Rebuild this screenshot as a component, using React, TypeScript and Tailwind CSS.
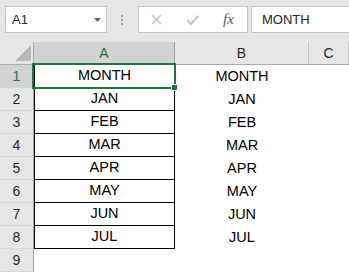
import React from 'react';

// ─── Data ─────────────────────────────────────────────────────────────────────

const months = ['MONTH', 'JAN', 'FEB', 'MAR', 'APR', 'MAY', 'JUN', 'JUL'];

// ─── Formula bar ──────────────────────────────────────────────────────────────

function FormulaBar() {
  return (
    <div className="flex h-[42px] items-start bg-[#e6e6e6] pl-[5px] pt-[6px]">
      {/* Name box */}
      <div className="flex h-[27px] w-[102px] items-center justify-between border border-[#c6c6c6] bg-white pl-[6px] pr-[5px]">
        <span className="text-[13px] text-[#262626]">A1</span>
        <svg width="7" height="4" viewBox="0 0 7 4">
          <path d="M0 0h7L3.5 4z" fill="#6b6b6b" />
        </svg>
      </div>

      {/* Grip dots */}
      <div className="ml-[14px] flex h-[27px] flex-col justify-center gap-[2px]">
        <span className="h-[2px] w-[2px] bg-[#a6a6a6]" />
        <span className="h-[2px] w-[2px] bg-[#a6a6a6]" />
        <span className="h-[2px] w-[2px] bg-[#a6a6a6]" />
      </div>

      {/* Cancel / enter / fx */}
      <div className="ml-[15px] flex h-[27px] w-[110px] items-center border border-[#c6c6c6] bg-white">
        <svg className="ml-[12px]" width="11" height="11" viewBox="0 0 11 11">
          <path d="M1 1l9 9M10 1l-9 9" stroke="#c4c4c4" strokeWidth="1.4" />
        </svg>
        <svg className="ml-[24px]" width="13" height="10" viewBox="0 0 13 10">
          <path d="M1 5l4 4 7-8" stroke="#c4c4c4" strokeWidth="2" fill="none" />
        </svg>
        <span className="ml-[24px] font-['Liberation_Serif',serif] text-[15px] italic leading-none text-[#595959]">
          fx
        </span>
      </div>

      {/* Formula input */}
      <div className="ml-[3px] flex h-[27px] flex-1 items-center border border-r-0 border-[#c6c6c6] bg-white pl-[10px]">
        <span className="text-[13px] text-[#262626]">MONTH</span>
      </div>
    </div>
  );
}

// ─── Grid ─────────────────────────────────────────────────────────────────────

function HeaderRow() {
  return (
    <div className="flex h-[23px] border-b border-[#ababab] bg-[#e6e6e6] text-[14px]">
      <div className="relative w-[34px] border-r border-[#ababab]">
        <svg className="absolute left-[15px] top-[3px]" width="16" height="16" viewBox="0 0 16 16">
          <path d="M16 0v16H0z" fill="#b9b9b9" />
        </svg>
      </div>
      <div className="flex w-[141px] items-center justify-center border-r border-[#9f9f9f] bg-[#d2d2d2] text-[#217346]">
        A
      </div>
      <div className="flex w-[134px] items-center justify-center border-r border-[#c6c6c6] text-[#262626]">
        B
      </div>
      <div className="flex w-[40px] items-center justify-center border-r border-[#c6c6c6] text-[#262626]">
        C
      </div>
    </div>
  );
}

function DataRow({ n, value }: { n: number; value?: string }) {
  const selected = n === 1;
  return (
    <div className="flex h-[23px]">
      <div
        className={`flex w-[34px] items-center justify-center border-r border-b border-r-[#ababab] border-b-[#d6d6d6] text-[14px] ${
          selected ? 'bg-[#d2d2d2] text-[#217346]' : 'bg-[#e6e6e6] text-[#262626]'
        }`}
      >
        {n}
      </div>
      <div
        className={`flex w-[141px] items-center justify-center text-[14.5px] text-black ${
          value ? 'border-x border-b border-black' : ''
        }`}
      >
        {value}
      </div>
      <div className="flex w-[134px] items-center justify-center text-[14.5px] text-black">{value}</div>
      <div className="w-[40px]" />
    </div>
  );
}

// ─── App ──────────────────────────────────────────────────────────────────────

export default function App() {
  return (
    <div className="relative h-[273px] w-[349px] overflow-hidden bg-white font-['Liberation_Sans',Arial,sans-serif]">
      <FormulaBar />
      <HeaderRow />
      {months.map((m, i) => (
        <DataRow key={m} n={i + 1} value={m} />
      ))}
      <DataRow n={9} />

      {/* Active cell selection */}
      <div className="absolute left-[32px] top-[63px] h-[26px] w-[144px] border-2 border-[#217346]" />
      <div className="absolute left-[171px] top-[84px] h-[7px] w-[7px] border border-white bg-[#217346]" />
    </div>
  );
}
